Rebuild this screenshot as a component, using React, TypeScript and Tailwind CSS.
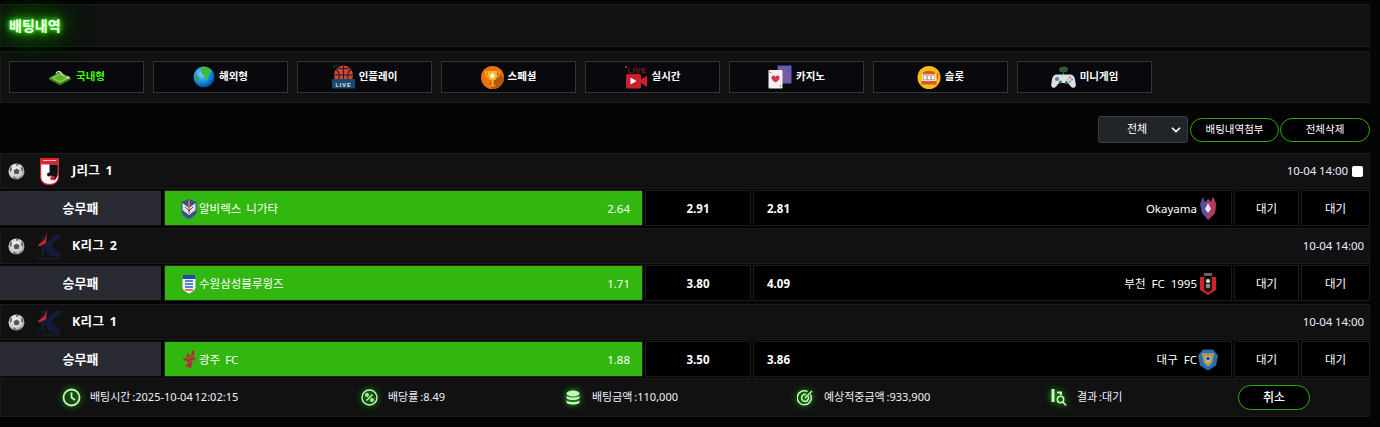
import { ChevronDown } from 'lucide-react'

const FONT = "font-['Noto_Sans','Noto_Sans_CJK_KR',sans-serif]"

function FieldIcon() {
  return (
    <svg width="24" height="16" viewBox="0 0 24 16">
      <path d="M1 9 12 3l11 6-11 6z" fill="#5fb52a" />
      <path d="M1 9 12 15l11-6v1.500L12 16.500 1 10.500z" fill="#2f7a18" />
      <path d="M8 4.500a3 3 0 0 1 5-1l2 3" fill="none" stroke="#d8e6d0" strokeWidth="1.200" />
      <path d="M5 9l7-3.800 7 3.800-7 3.800z" fill="none" stroke="#a6dc7c" strokeWidth=".6" />
      <circle cx="20" cy="8.500" r="1.500" fill="#c8c8c8" />
    </svg>
  )
}

function GlobeIcon() {
  return (
    <svg width="22" height="22" viewBox="0 0 22 22">
      <defs>
        <radialGradient id="globe" cx=".4" cy=".35" r=".75">
          <stop offset="0" stopColor="#7cd0fa" />
          <stop offset=".6" stopColor="#0a86dc" />
          <stop offset="1" stopColor="#032c66" />
        </radialGradient>
      </defs>
      <circle cx="11" cy="11" r="10.500" fill="url(#globe)" />
      <path d="M8 1c4-1 8 0 11 4-1 3-3 2-4 4s2 3-1 5.500c-2-1-1-4-3-5S7 5 8 1z" fill="#3fbb3a" />
      <path d="M2 9c2 0 4 2 4 4s-1 3-2 2-2-3-2-6z" fill="#2f9e5a" />
    </svg>
  )
}

function LiveBallIcon() {
  return (
    <svg width="23" height="24" viewBox="0 0 23 24">
      <path d="M1 3a7 7 0 0 1 5-3" fill="none" stroke="#123047" strokeWidth="1.500" />
      <circle cx="11.500" cy="10" r="9.500" fill="#d8452a" />
      <path d="M2 10h19M11.500 1v14M4 4c4 3 4 9 2 12M19 4c-4 3-4 9-2 12M5 3c4 1 9 1 13 0" fill="none" stroke="#15222e" strokeWidth="1.100" />
      <rect x="0" y="14" width="23" height="9.500" rx="1" fill="#164a70" />
      <text x="11.500" y="21.500" textAnchor="middle" fontSize="5.500" fontWeight="700" letterSpacing="1" fill="#e8edf2" fontFamily="Liberation Sans, sans-serif">LIVE</text>
    </svg>
  )
}

function TrophyIcon() {
  return (
    <svg width="23" height="23" viewBox="0 0 23 23">
      <circle cx="11.500" cy="11.500" r="11.500" fill="#f2710f" />
      <path d="M11.500 23A11.500 11.500 0 0 0 23 11.500L16 5 8 19z" fill="#b9550e" />
      <path d="M7 5h9v5a4.500 4.500 0 0 1-9 0z" fill="#f5b82c" />
      <path d="M7 6H4.500c0 3 1 4.500 3 5M16 6h2.500c0 3-1 4.500-3 5" fill="none" stroke="#f5b82c" strokeWidth="1.200" />
      <rect x="10.500" y="14" width="2" height="5" fill="#f5b82c" />
      <rect x="8.500" y="19" width="6" height="1.500" fill="#e8a21f" />
      <path d="m11.500 6.300 1 2.100 2.200.3-1.600 1.500.4 2.200-2-1-2 1 .4-2.200-1.600-1.500 2.200-.3z" fill="#fff6d8" />
    </svg>
  )
}

function LiveCamIcon() {
  return (
    <svg width="23" height="24" viewBox="0 0 23 24">
      <circle cx="1" cy="2" r=".8" fill="#d9a326" />
      <text x="2.500" y="7.500" fontSize="8" fontWeight="700" letterSpacing=".3" fill="#7c1a22" fontFamily="Liberation Sans, sans-serif">LIVE</text>
      <rect x="1" y="9" width="15" height="14.500" rx="1.500" fill="#c91f2e" />
      <path d="M16 14.500 22 10.500v11.500l-6-4z" fill="#c91f2e" />
      <path d="M5.500 12.500v7l6-3.500z" fill="#fff" />
    </svg>
  )
}

function CardsIcon() {
  return (
    <svg width="24" height="24" viewBox="0 0 24 24">
      <rect x="9.500" y="0.500" width="14" height="18" rx="1" fill="#5a5fb8" />
      <path d="M11 2l11 14M14 1.500l8.500 11M11 6l8 11M11 10l5 7" stroke="#b0527c" strokeWidth="1.200" fill="none" />
      <rect x="0.500" y="5" width="14" height="18.500" rx="1" fill="#f2f2f2" />
      <path d="M7.500 17.500c-3-2.200-4-3.300-4-4.600a2 2 0 0 1 4-.6 2 2 0 0 1 4 .6c0 1.300-1 2.400-4 4.600z" fill="#d9344a" />
      <circle cx="2.500" cy="7.500" r=".7" fill="#d9344a" />
      <circle cx="12.500" cy="21" r=".7" fill="#d9344a" />
    </svg>
  )
}

function SlotIcon() {
  return (
    <svg width="24" height="23" viewBox="0 0 24 23">
      <circle cx="12" cy="11.500" r="11.500" fill="#f7bf0d" />
      <path d="M6 6.500c1-2 11-2 12 0v2H6z" fill="#d9553a" />
      <rect x="5" y="8.500" width="14" height="6.500" fill="#f3e7d3" />
      <rect x="6.300" y="9.800" width="3" height="4" fill="#fff" stroke="#8a7660" strokeWidth=".5" />
      <rect x="10.500" y="9.800" width="3" height="4" fill="#fff" stroke="#8a7660" strokeWidth=".5" />
      <rect x="14.700" y="9.800" width="3" height="4" fill="#fff" stroke="#8a7660" strokeWidth=".5" />
      <rect x="4.500" y="15" width="15" height="3.500" fill="#d9553a" />
      <rect x="20" y="7" width="1.200" height="6" fill="#e84a2e" />
    </svg>
  )
}

function PadIcon() {
  return (
    <svg width="25" height="23" viewBox="0 0 25 23">
      <ellipse cx="12.500" cy="3.500" rx="4.500" ry="3" fill="#2d5c33" />
      <path d="M12.500 6.500v2.500" stroke="#3d6c43" strokeWidth="1" />
      <path d="M6 8.500h13c3 0 4.500 2 5 5l.8 5c.3 3-3 4.500-5 2L17 17H8l-2.800 3.500c-2 2.500-5.300 1-5-2l.8-5c.5-3 2-5 5-5z" fill="#d6e2ea" />
      <circle cx="6" cy="13" r="2" fill="#6a7a86" />
      <circle cx="19" cy="11.500" r="1" fill="#d9554a" />
      <circle cx="21" cy="13.500" r="1" fill="#4a90d9" />
      <circle cx="17" cy="13.500" r="1" fill="#e8c23a" />
      <circle cx="19" cy="15.500" r="1" fill="#5ab04a" />
      <circle cx="9.500" cy="16" r="1.500" fill="#54626e" />
      <circle cx="15.500" cy="16.500" r="1.500" fill="#54626e" />
    </svg>
  )
}

function SoccerBall() {
  return (
    <svg width="17" height="17" viewBox="0 0 17 17" className="blur-[0.4px]">
      <defs>
        <radialGradient id="ball" cx=".4" cy=".35" r=".7">
          <stop offset="0" stopColor="#f2f2f2" />
          <stop offset=".75" stopColor="#c8c8c8" />
          <stop offset="1" stopColor="#777777" />
        </radialGradient>
      </defs>
      <circle cx="8.500" cy="8.500" r="8" fill="url(#ball)" />
      <path d="M8.500 5.500l3 2-1 3.500h-4l-1-3.500z" fill="#555555" />
      <path d="M8 .8l3.500.5-3 2zM1.500 6l2-3 .5 3.500-1.500 3zM15.500 6l-2-3-.5 3.500 1.500 3zM4.500 14l3 2.200 2 0-3-2.700zM12.800 13.500l-2.500 2.500 3-1.200z" fill="#666666" />
    </svg>
  )
}

function JLeagueLogo() {
  return (
    <svg width="19" height="27" viewBox="0 0 19 27">
      <path d="M0 0h19v6H0z" fill="#e0242f" />
      <path d="M.6 6h17.800v13a7.500 7.500 0 0 1-7.500 7.400H8.100A7.500 7.500 0 0 1 .6 19z" fill="#fff" stroke="#e0242f" strokeWidth="1.200" />
      <path d="M9.500 6.500h8.300V15c0 3-1.500 6-3.500 7.500-1-3-3-5-4.800-6z" fill="#111" />
      <circle cx="9" cy="16.500" r="2" fill="#111" />
      <circle cx="12.500" cy="20" r="2.300" fill="#e0242f" />
      <path d="M3 2.500h13" stroke="#f5c2c5" strokeWidth="1" />
    </svg>
  )
}

function KLeagueLogo() {
  return (
    <svg width="24" height="29" viewBox="0 0 24 29">
      <path d="M6 3v20M8 13 20 4h3L12 13l10 10h-8z" fill="#131d36" stroke="#131d36" strokeWidth="3" />
      <path d="M10 0 7.500 8 1 13l1.500 1.500L9 11z" fill="#d8222c" />
      <text x="12" y="28" textAnchor="middle" fontSize="3.500" letterSpacing=".5" fill="#1e2a4a" fontFamily="Liberation Sans, sans-serif">K LEAGUE</text>
    </svg>
  )
}

function Crest({ kind }: { kind: string }) {
  if (kind === 'niigata')
    return (
      <svg width="16" height="20" viewBox="0 0 16 20">
        <path d="M.5 3 8 0l7.500 3v9c0 4-4 6.500-7.500 8-3.500-1.500-7.500-4-7.500-8z" fill="#3b4f8e" />
        <path d="M1.500 4 8 9l6.500-5v7L8 16 1.500 11z" fill="#dfe3ee" />
        <path d="M8 1.500v13" stroke="#e8702a" strokeWidth="1.800" />
        <path d="M4 8l4 4 4-4" fill="none" stroke="#3b4f8e" strokeWidth="1" />
      </svg>
    )
  if (kind === 'suwon')
    return (
      <svg width="14" height="20" viewBox="0 0 14 20">
        <path d="M.5 1h13v12c0 3-3 5-6.500 6.500C3.500 18 .5 16 .5 13z" fill="#f2f4f8" />
        <path d="M.5 1h13v4H.5z" fill="#1f4aa8" />
        <path d="M3 7h8M3 10h8M3 13h8" stroke="#2a5ac0" strokeWidth="1.600" />
        <path d="M3 16h8" stroke="#d83a3a" strokeWidth="1.400" />
      </svg>
    )
  if (kind === 'gwangju')
    return (
      <svg width="15" height="21" viewBox="0 0 15 21">
        <path d="M10 1c3 1 3 4 1 6 2 1 3 3 2 5l-3-1c1 3 0 6-2 9-1-2-3-3-5-3 2-1 3-3 2-5-2 0-4-1-4-3 2 0 3 0 4-1-1-2 0-4 2-4-1 2 0 3 1 3 2-1 2-4 2-6z" fill="#b72a3a" />
        <path d="M4 9c2 1 5 0 7-2M5 14c2 0 4-1 5-3" fill="none" stroke="#32b610" strokeWidth=".8" />
      </svg>
    )
  if (kind === 'okayama')
    return (
      <svg width="17" height="23" viewBox="0 0 17 23">
        <path d="M3 0l2 5 3-3 3 3 2-5 3 7-1 9-7 7-6-7-2-9z" fill="#5a4f9a" />
        <path d="M8 2l3 3 2-5 3 7-1 9-7 7z" fill="#b8365c" />
        <path d="M8 6l-3 6 3 4 3-4z" fill="#e8e8f0" />
      </svg>
    )
  if (kind === 'bucheon')
    return (
      <svg width="18" height="22" viewBox="0 0 18 22">
        <path d="M1 4h16v13l-8 5-8-5z" fill="#d2232a" />
        <path d="M5 0h8v3H5z" fill="#666" />
        <path d="M5 4h8v13l-4 2.500L5 17z" fill="#1a1a1a" />
        <circle cx="9" cy="8" r="2" fill="#dcdcdc" />
        <path d="M7 11h4v4H7z" fill="#8a8a8a" />
      </svg>
    )
  return (
    <svg width="22" height="22" viewBox="0 0 20 21">
      <path d="M5 0h10l5 6-2 10-8 5-8-5L0 6z" fill="#2f6fa8" />
      <path d="M4 4h12l-2 9-4 4-4-4z" fill="#9cc4de" />
      <path d="M5.500 5.500h9L13 12l-3 3-3-3z" fill="none" stroke="#d98a1e" strokeWidth="1.800" />
      <circle cx="10" cy="9" r="1.800" fill="#1f4a78" />
    </svg>
  )
}

function Glow({ children }: { children: React.ReactNode }) {
  return (
    <span className="flex h-5 w-5 items-center justify-center text-[#c4f7bc] drop-shadow-[0_0_3px_#22e010]">
      {children}
    </span>
  )
}

const NAV = [
  { label: '국내형', icon: <FieldIcon />, active: true },
  { label: '해외형', icon: <GlobeIcon /> },
  { label: '인플레이', icon: <LiveBallIcon /> },
  { label: '스페셜', icon: <TrophyIcon /> },
  { label: '실시간', icon: <LiveCamIcon /> },
  { label: '카지노', icon: <CardsIcon /> },
  { label: '슬롯', icon: <SlotIcon /> },
  { label: '미니게임', icon: <PadIcon /> },
]

const GAMES = [
  { league: 'J리그 1', logo: <JLeagueLogo />, home: '알비렉스 니가타', homeCrest: 'niigata', h: '2.64', d: '2.91', a: '2.81', away: 'Okayama', awayCrest: 'okayama', check: true },
  { league: 'K리그 2', logo: <KLeagueLogo />, home: '수원삼성블루윙즈', homeCrest: 'suwon', h: '1.71', d: '3.80', a: '4.09', away: '부천 FC 1995', awayCrest: 'bucheon', gap: 'mb-[3px]' },
  { league: 'K리그 1', logo: <KLeagueLogo />, home: '광주 FC', homeCrest: 'gwangju', h: '1.88', d: '3.50', a: '3.86', away: '대구 FC', awayCrest: 'daegu' },
]

const cell = 'flex h-full items-center border border-[#1c1c1c] bg-black pt-px'

function GameRow({ game }: { game: (typeof GAMES)[number] }) {
  return (
    <div className={game.gap ?? 'mb-[2px]'}>
      <div className="mb-px flex h-[36px] items-center border border-[#1a1a1a] bg-[#111111] pr-[5px]">
        <span className="ml-[7px] w-[17px]"><SoccerBall /></span>
        <span className="ml-[9px] flex w-[30px] justify-center">{game.logo}</span>
        <span className="ml-2 text-[12.5px] font-bold tracking-[0.3px] text-white [word-spacing:2px]">{game.league}</span>
        <span className="ml-auto text-[11.500px] tracking-[-0.1px] text-[#e8eefc]">10-04 14:00</span>
        {game.check && <span className="ml-1 mr-px h-[11px] w-[11px] rounded-[2px] bg-white" />}
      </div>
      <div className="flex h-[36px] text-[11.500px] text-white">
        <div className="flex h-full w-[161px] items-center justify-center border-y border-[#0c0c0c] bg-[#2a2a33] pt-px text-[13px] font-bold">승무패</div>
        <div className="ml-[3px] flex h-full w-[479px] items-center border border-[#222222] bg-[#32b610] pl-[15px] pr-3 pt-px">
          <span className="flex w-[18px] justify-center"><Crest kind={game.homeCrest} /></span>
          <span className="ml-px [word-spacing:2px]">{game.home}</span>
          <span className="ml-auto">{game.h}</span>
        </div>
        <div className={`${cell} ml-[2px] w-[106px] justify-center font-bold`}>{game.d}</div>
        <div className={`${cell} ml-[2px] w-[479px] pl-[13px] pr-[13px] font-bold`}>
          {game.a}
          <span className="ml-auto font-normal [word-spacing:3px]">{game.away}</span>
          <span className="ml-px flex w-[20px] justify-center"><Crest kind={game.awayCrest} /></span>
        </div>
        <div className={`${cell} ml-[2px] w-[65px] justify-center`}>대기</div>
        <div className={`${cell} ml-[2px] w-[69px] justify-center`}>대기</div>
      </div>
    </div>
  )
}

function FooterItem({ icon, text, className }: { icon: React.ReactNode; text: string; className: string }) {
  return (
    <div className={`flex items-center gap-[9px] text-[11px] text-[#eef2fa] [word-spacing:-1px] ${className}`}>
      <Glow>{icon}</Glow>
      <span>{text}</span>
    </div>
  )
}

export default function App() {
  return (
    <div className={`h-[427px] w-[1380px] overflow-hidden bg-[#050505] pt-1 ${FONT}`}>
      <div className="w-[1370px]">
        <div className="flex h-[43px] items-center border border-[#1a1a1a] bg-[#111111] pl-2">
          <h1 className="relative z-10 text-sm font-bold text-white [text-shadow:0_0_2px_#3cff10,0_0_5px_#3cff10,0_0_10px_#35e010,0_0_20px_#2db80a,0_0_36px_#2db80a,0_0_50px_#1e8a08]">
            배팅내역
          </h1>
        </div>

        <div className="mt-1 flex h-[52px] items-center gap-[9px] border border-[#1a1a1a] bg-[#111111] pl-2">
          {NAV.map((item) => (
            <button
              key={item.label}
              type="button"
              className={`relative z-20 flex h-[32px] w-[135px] items-center justify-center gap-[4px] border border-[#333333] bg-[#08080d] text-[10.500px] font-bold ${item.active ? 'text-[#3dff00]' : 'text-white'}`}
            >
              {item.icon}
              <span>{item.label}</span>
            </button>
          ))}
        </div>

        <div className="flex h-[50px] items-center justify-end pt-[3px]">
          <div className="flex h-[27px] w-[90px] items-center rounded-[3px] border border-[#3a3f45] bg-[#212529] pl-[28px] pr-1 text-[11px] text-white">
            전체
            <ChevronDown className="ml-auto h-[14px] w-[14px]" strokeWidth={3} />
          </div>
          <button type="button" className="ml-[2px] h-[24px] w-[89px] rounded-full border border-[#2ea80f] bg-black text-[10.500px] text-white">배팅내역첨부</button>
          <button type="button" className="ml-px h-[24px] w-[90px] rounded-full border border-[#2ea80f] bg-black text-[10.500px] text-white">전체삭제</button>
        </div>

        {GAMES.map((game) => (
          <GameRow key={game.league} game={game} />
        ))}

        <div className="-mt-px flex h-[39px] items-center border border-[#1a1a1a] bg-[#111111]">
          <FooterItem
            className="ml-[60px] w-[298px]"
            text="배팅시간 :2025-10-04 12:02:15"
            icon={
              <svg width="19" height="19" viewBox="0 0 19 19" fill="none" stroke="currentColor" strokeWidth="1.800">
                <circle cx="9.500" cy="9.500" r="8" />
                <path d="M9.500 4.500v5l3.500 2.500" />
              </svg>
            }
          />
          <FooterItem
            className="w-[204px]"
            text="배당률 :8.49"
            icon={
              <svg width="17" height="17" viewBox="0 0 17 17" fill="none" stroke="currentColor" strokeWidth="1.400">
                <circle cx="8.500" cy="8.500" r="7.500" />
                <path d="M11.500 5.500l-6 6" />
                <circle cx="6" cy="6" r="1.200" />
                <circle cx="11" cy="11" r="1.200" />
              </svg>
            }
          />
          <FooterItem
            className="w-[232px]"
            text="배팅금액 :110,000"
            icon={
              <svg width="16" height="16" viewBox="0 0 16 16" fill="currentColor">
                <ellipse cx="8" cy="3.500" rx="6.500" ry="3" />
                <path d="M1.500 5.500c1 2.700 12 2.700 13 0V8c-1 2.700-12 2.700-13 0zM1.500 10c1 2.700 12 2.700 13 0v2.500c-1 2.700-12 2.700-13 0z" />
              </svg>
            }
          />
          <FooterItem
            className="w-[253px]"
            text="예상적중금액 :933,900"
            icon={
              <svg width="17" height="17" viewBox="0 0 17 17" fill="none" stroke="currentColor" strokeWidth="1.500">
                <path d="M13.500 5.500A7 7 0 1 1 10.500 2.500" />
                <path d="M11 7a3.500 3.500 0 1 1-2-1.500" />
                <path d="M8 9l7-7" />
              </svg>
            }
          />
          <FooterItem
            className="w-[190px]"
            text="결과 :대기"
            icon={
              <svg width="17" height="19" viewBox="0 0 17 19" fill="none" stroke="currentColor" strokeWidth="1.500">
                <path d="M3 1v13" strokeWidth="3" />
                <path d="M7 4.500h4v2.500" strokeWidth="2" />
                <circle cx="10.500" cy="11.500" r="3.200" />
                <path d="M13 14l3 3.500" />
              </svg>
            }
          />
          <button type="button" className="h-[25px] w-[72px] rounded-full border border-[#2ea80f] bg-black text-xs font-medium text-white">취소</button>
        </div>
      </div>
    </div>
  )
}
